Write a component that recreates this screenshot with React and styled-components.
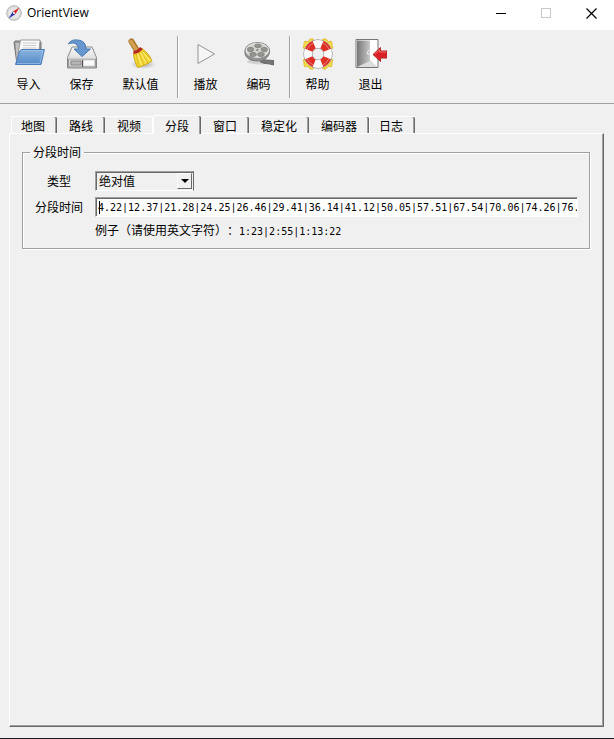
import React, { useState } from "react";
import styled, { createGlobalStyle, css } from "styled-components";

const FACE = "#f0f0f0";
const SHADOW = "#a0a0a0";
const DARK = "#696969";
const LIGHT = "#ffffff";

const GlobalStyle = createGlobalStyle`
  *, *::before, *::after { box-sizing: border-box; }
  body {
    margin: 0;
    background: ${FACE};
    color: #000;
    font: 12px/16px "Noto Sans CJK SC", sans-serif;
  }
  button, input, select { font: inherit; color: inherit; }
`;

const Window = styled.div`
  display: flex;
  flex-direction: column;
  min-height: 100vh;
  border-bottom: 1px solid #1c1c22;
`;

const TitleBar = styled.header`
  display: flex;
  align-items: center;
  height: 30px;
  padding: 0 0 4px 6px;
  background: #fff;
`;

const Title = styled.h1`
  flex: 1;
  margin: 0 0 0 5px;
  font: 12px/16px "Open Sans", "Noto Sans", sans-serif;
`;

const CaptionButton = styled.button`
  display: flex;
  align-items: center;
  justify-content: center;
  width: 45px;
  height: 26px;
  padding: 0;
  border: 0;
  background: none;
  color: ${(p) => (p.disabled ? "#c8c8c8" : "#000")};
`;

const ToolBar = styled.nav`
  display: flex;
  flex-shrink: 0;
  height: 74px;
  padding: 6px 2px 5px;
  border-bottom: 1px solid ${SHADOW};
`;

const ToolButton = styled.button`
  display: flex;
  flex-direction: column;
  align-items: center;
  gap: 6px;
  width: ${(p) => (p.$wide ? "65px" : "53px")};
  padding: 2px 0 0;
  border: 0;
  background: none;
  white-space: nowrap;
`;

const Separator = styled.div`
  width: 2px;
  margin: 0 0 0 4px;
  border-left: 1px solid ${SHADOW};
  border-right: 1px solid ${LIGHT};
`;

const Tabs = styled.div`
  display: flex;
  align-items: flex-end;
  height: 18px;
  margin: 11px 10px 0 11px;
`;

const Tab = styled.button`
  flex: none;
  height: ${(p) => (p.$active ? "19px" : "17px")};
  padding: ${(p) => (p.$active ? "0" : "1px")} 12px 0 ${(p) => (p.$edge ? "9px" : "11px")};
  margin-bottom: ${(p) => (p.$active ? "-1px" : "0")};
  border: 0;
  border-top: 1px solid ${LIGHT};
  border-left: 1px solid ${(p) => (p.$edge || p.$active ? LIGHT : FACE)};
  border-radius: 2px 2px 0 0;
  background: ${FACE};
  line-height: 15px;
  white-space: nowrap;
  z-index: ${(p) => (p.$active ? 1 : 0)};
  ${(p) =>
    p.$divider
      ? css`
          box-shadow: inset -1px 0 ${DARK}, inset -2px 0 ${SHADOW};
        `
      : css`
          box-shadow: inset -1px 0 ${LIGHT};
        `}
`;

const Pane = styled.main`
  flex: 1;
  margin: 0 10px 11px 9px;
  padding: 10px 13px 10px 12px;
  border: 1px solid ${LIGHT};
  border-right-color: ${DARK};
  border-bottom-color: ${DARK};
  box-shadow: inset -1px -1px ${SHADOW};
`;

const Group = styled.fieldset`
  min-width: 0;
  margin: 0;
  padding: 11px 11px 9px;
  border: 1px solid ${SHADOW};
  box-shadow: inset 1px 1px ${LIGHT}, 1px 1px ${LIGHT};
`;

const Legend = styled.legend`
  margin-left: -4px;
  padding: 0 3px;
  background: ${FACE};
`;

const Form = styled.div`
  display: grid;
  grid-template-columns: 50px minmax(0, 1fr);
  gap: 6px 11px;
  align-items: center;
`;

const Label = styled.label`
  text-align: center;
  white-space: nowrap;
`;

const sunken = css`
  border: 1px solid;
  border-color: ${SHADOW} ${LIGHT} ${LIGHT} ${SHADOW};
  box-shadow: inset 1px 1px ${DARK};
`;

const SelectBox = styled.div`
  position: relative;
  width: 99px;
  height: 20px;
`;

const Select = styled.select`
  ${sunken}
  border-color: ${SHADOW} ${DARK} ${LIGHT} ${SHADOW};
  display: block;
  appearance: none;
  width: 100%;
  height: 20px;
  padding: 0 18px 0 3px;
  border-radius: 0;
  background: ${FACE};
  line-height: 16px;
  outline: none;
`;

const DropArrow = styled.span`
  position: absolute;
  top: 2px;
  right: 2px;
  display: flex;
  align-items: center;
  justify-content: center;
  width: 15px;
  height: 16px;
  border: 1px solid;
  border-color: ${LIGHT} ${DARK} ${DARK} ${LIGHT};
  background: ${FACE};
  pointer-events: none;
`;

const FieldBox = styled.div`
  position: relative;

  &::before {
    content: "";
    position: absolute;
    top: 4px;
    left: 4px;
    width: 1px;
    height: 13px;
    background: #000;
  }
`;

const Field = styled.input`
  ${sunken}
  display: block;
  width: 100%;
  height: 20px;
  padding: 0 0 0 2px;
  background: #fff;
  font: 10px/16px "DejaVu Sans Mono", monospace;
  outline: none;
`;

const Hint = styled.p`
  grid-column: 2;
  margin: 0;
  line-height: 14px;
  white-space: nowrap;
  text-spacing-trim: space-all;
`;

const Mono = styled.span`
  font: 10px/14px "DejaVu Sans Mono", monospace;
`;

const CompassIcon = () => (
  <svg width="16" height="16" viewBox="0 0 16 16" aria-hidden="true">
    <circle cx="8" cy="8" r="7.3" fill="#dcdcdc" stroke="#b4b4b4" />
    <circle cx="8" cy="8" r="5.6" fill="#e6e6e6" />
    <path d="M13.4 2.6 9.5 9 7 6.5Z" fill="#d62728" />
    <path d="M2.6 13.4 6.8 6.8 9.2 9.2Z" fill="#2733a8" />
    <circle cx="8" cy="8" r="1.1" fill="#eee" />
  </svg>
);

const ImportIcon = () => (
  <svg width="32" height="32" viewBox="0 0 32 32" aria-hidden="true">
    <defs>
      <linearGradient id="folder" x2="0" y2="1">
        <stop stopColor="#8ab4e0" />
        <stop offset="1" stopColor="#5589c6" />
      </linearGradient>
    </defs>
    <path d="M1 4.5 2 3h5l1 1h20v21l-24 1Z" fill="#989898" stroke="#777" />
    <path d="M2.5 5h4v17l-2.5 2Z" fill="#c2c2c2" />
    <path d="M7.5 2h19.7l-1.7 14H5Z" fill="#fafafa" stroke="#999" />
    <path d="M10 5h14M10 7.5h13M9.500 10h14" stroke="#ccc" />
    <path d="M8.500 11.500h22.900L28 26.500H2.500L6.500 13Z" fill="url(#folder)" stroke="#4a7cb8" />
    <path d="M8.800 12.500h21L27 25.500H4" fill="none" stroke="#a4c8eb" opacity=".65" />
  </svg>
);

const SaveIcon = () => (
  <svg width="32" height="32" viewBox="0 0 32 32" aria-hidden="true">
    <defs>
      <linearGradient id="drive" x2="0" y2="1">
        <stop stopColor="#fafafa" />
        <stop offset="1" stopColor="#c8c8c8" />
      </linearGradient>
    </defs>
    <path d="M6 9h20l4.500 10.500V30h-29V19.500Z" fill="url(#drive)" stroke="#888" strokeLinejoin="round" />
    <path d="M2 20.500h28" stroke="#fff" />
    <rect x="2.500" y="21" width="27" height="8" fill="#d4d4d4" stroke="#999" />
    <path d="M5 23h10v4H5Z" fill="#b5b5b5" stroke="#888" />
    <path d="M16.500 22v7" stroke="#555" />
    <path d="M18 22.500h10v5H18Z" fill="#fafafa" />
    <path d="M2.500 6C4 2.500 8 1.500 11.500 2c6 .5 8.500 4 8.500 9h4.500L16 18.500 8 11h4.500C12 7.500 10.500 5.500 7.500 5 5.500 4.800 4 5.300 2.500 6Z" fill="#6797ce" stroke="#4477b3" strokeLinejoin="round" />
  </svg>
);

const BroomIcon = () => (
  <svg width="32" height="32" viewBox="0 0 32 32" aria-hidden="true">
    <defs>
      <radialGradient id="dust">
        <stop stopColor="#777" stopOpacity=".6" />
        <stop offset="1" stopColor="#777" stopOpacity="0" />
      </radialGradient>
    </defs>
    <ellipse cx="18" cy="26.500" rx="13" ry="4.500" fill="url(#dust)" />
    <path d="M6.500 3.500 12 12.500" stroke="#a8762c" strokeWidth="6" strokeLinecap="round" />
    <path d="M6 3.500 11.500 12" stroke="#d3a050" strokeWidth="3.500" strokeLinecap="round" />
    <path d="M8.500 15 17 10.500c4 3 8 7 10 12.500C22 26 17 28.500 12.500 29.500 10.500 25 8.500 20 8.500 15Z" fill="#f4d934" stroke="#d0a91c" />
    <path d="m11 16 3 12m0-13 5 12m-3-13 7 11m-5-12 8 8" fill="none" stroke="#d4ab1c" strokeWidth=".7" />
    <path d="m12.500 16 4 11m-.500-12 5 10m-3-11 7 9" fill="none" stroke="#fff38a" strokeWidth=".9" />
    <path d="M8.500 14.500Q13.500 14 16.500 10" fill="none" stroke="#b72622" strokeWidth="3.200" />
  </svg>
);

const PlayIcon = () => (
  <svg width="32" height="32" viewBox="0 0 32 32" aria-hidden="true">
    <path d="M8 6.500v19L24.500 16Z" fill="#f6f6f6" stroke="#929292" strokeLinejoin="round" />
  </svg>
);

const ReelIcon = () => (
  <svg width="32" height="32" viewBox="0 0 32 32" aria-hidden="true">
    <ellipse cx="17" cy="23.500" rx="13" ry="3" fill="#d4d4d4" />
    <path d="M19 21c4 2 7 1 11.500 1.500v4.500c-5-2-8-.5-13-3Z" fill="#777" stroke="#666" />
    <path d="M2 12v3.500c1 5 6 7.500 12.500 7.500s11-3.500 12-8.500V12Z" fill="#939393" stroke="#777" />
    <ellipse cx="14.300" cy="12.500" rx="12.300" ry="8" fill="#d0d1cc" stroke="#8a8a8a" />
    <ellipse cx="14.300" cy="12.300" rx="11" ry="6.800" fill="none" stroke="#e9e9e5" />
    <g fill="#92948f" stroke="#7a7a7a" strokeWidth=".7">
      <ellipse cx="15" cy="7.800" rx="3.300" ry="1.900" />
      <ellipse cx="7.500" cy="11.500" rx="3.100" ry="2.200" />
      <ellipse cx="21.300" cy="11.500" rx="3.100" ry="2.200" />
      <ellipse cx="10" cy="16.500" rx="3.300" ry="2.100" />
      <ellipse cx="18" cy="16.500" rx="3.300" ry="2.100" />
    </g>
    <ellipse cx="14.300" cy="12" rx="1.200" ry=".8" fill="#666" />
  </svg>
);

const HelpIcon = () => (
  <svg width="32" height="32" viewBox="0 0 32 32" aria-hidden="true">
    <g fill="#f7dd4b" stroke="#dfbd37" strokeLinejoin="round">
      <path d="m2 5 1-2 3 1 2-3h3l1 3-7 7-4-1 1-2Z" />
      <path d="m30 5-1-2-3 1-2-3h-3l-1 3 7 7 4-1-1-2Z" />
      <path d="m2 27 1 2 3-1 2 3h3l1-3-7-7-4 1 1 2Z" />
      <path d="m30 27-1 2-3-1-2 3h-3l-1-3 7-7 4 1-1 2Z" />
    </g>
    <circle cx="16" cy="16" r="10" fill="none" stroke="#858585" strokeWidth="9" />
    <circle cx="16" cy="16" r="10" fill="none" stroke="#fafafa" strokeWidth="8" />
    <circle cx="16" cy="16" r="10" fill="none" stroke="#df3028" strokeWidth="8" pathLength="80" strokeDasharray="10 10" strokeDashoffset="-5" />
    <circle cx="16" cy="16" r="12" fill="none" stroke="#fff" opacity=".35" />
  </svg>
);

const ExitIcon = () => (
  <svg width="32" height="32" viewBox="0 0 32 32" aria-hidden="true">
    <defs>
      <linearGradient id="door">
        <stop stopColor="#777" />
        <stop offset="1" stopColor="#c9c9c9" />
      </linearGradient>
    </defs>
    <path d="M1 1.500h22v28H1Z" fill="#fff" stroke="#777" />
    <path d="M2 29 15 22l7.500 7Z" fill="#ddd" />
    <path d="M2 2.500h13V23L2 29Z" fill="url(#door)" />
    <path d="m14.500 12-2 2v2M14.500 15l-1 2" fill="none" stroke="#eee" />
    <path d="m18 16.500 7.500-7V13H32v7h-6.500v3.500Z" fill="#d82225" stroke="#b5292b" strokeLinejoin="round" />
    <path d="m20 16 4.500-4.200V14H31" fill="none" stroke="#f06b66" />
  </svg>
);

const MinimizeIcon = () => (
  <svg width="11" height="11" shapeRendering="crispEdges" aria-hidden="true">
    <path d="M0 5.500h10" stroke="currentColor" />
  </svg>
);

const MaximizeIcon = () => (
  <svg width="11" height="11" shapeRendering="crispEdges" aria-hidden="true">
    <path d="M.5.5h9v9h-9Z" fill="none" stroke="currentColor" />
  </svg>
);

const CloseIcon = () => (
  <svg width="11" height="11" aria-hidden="true">
    <path d="m.5.5 10 10m0-10-10 10" stroke="currentColor" strokeWidth="1.200" />
  </svg>
);

const toolGroups = [
  [
    { label: "导入", Icon: ImportIcon },
    { label: "保存", Icon: SaveIcon },
    { label: "默认值", Icon: BroomIcon, wide: true },
  ],
  [
    { label: "播放", Icon: PlayIcon },
    { label: "编码", Icon: ReelIcon },
  ],
  [
    { label: "帮助", Icon: HelpIcon },
    { label: "退出", Icon: ExitIcon },
  ],
];

const tabs = ["地图", "路线", "视频", "分段", "窗口", "稳定化", "编码器", "日志"];

export default function App() {
  const [active, setActive] = useState(3);
  const [splits, setSplits] = useState(
    "4.22|12.37|21.28|24.25|26.46|29.41|36.14|41.12|50.05|57.51|67.54|70.06|74.26|76."
  );

  return (
    <Window>
      <GlobalStyle />
      <TitleBar>
        <CompassIcon />
        <Title>OrientView</Title>
        <CaptionButton aria-label="最小化"><MinimizeIcon /></CaptionButton>
        <CaptionButton aria-label="最大化" disabled><MaximizeIcon /></CaptionButton>
        <CaptionButton aria-label="关闭"><CloseIcon /></CaptionButton>
      </TitleBar>
      <ToolBar>
        {toolGroups.map((group, g) => (
          <React.Fragment key={g}>
            {g > 0 && <Separator />}
            {group.map(({ label, Icon, wide }) => (
              <ToolButton key={label} $wide={wide}>
                <Icon />
                {label}
              </ToolButton>
            ))}
          </React.Fragment>
        ))}
      </ToolBar>
      <Tabs role="tablist">
        {tabs.map((name, i) => (
          <Tab
            key={name}
            role="tab"
            aria-selected={i === active}
            $active={i === active}
            $edge={i === 0 || i === tabs.length - 1}
            $divider={i !== active - 1}
            onClick={() => setActive(i)}
          >
            {name}
          </Tab>
        ))}
      </Tabs>
      <Pane role="tabpanel">
        <Group>
          <Legend>分段时间</Legend>
          <Form>
            <Label htmlFor="type">类型</Label>
            <SelectBox>
              <Select id="type" defaultValue="absolute">
                <option value="absolute">绝对值</option>
              </Select>
              <DropArrow>
                <svg width="8" height="4" aria-hidden="true">
                  <path d="M0 0h8L4 4Z" />
                </svg>
              </DropArrow>
            </SelectBox>
            <Label htmlFor="splits">分段时间</Label>
            <FieldBox>
              <Field id="splits" value={splits} onChange={(e) => setSplits(e.target.value)} />
            </FieldBox>
            <Hint>
              例子（请使用英文字符）：<Mono>1:23|2:55|1:13:22</Mono>
            </Hint>
          </Form>
        </Group>
      </Pane>
    </Window>
  );
}
